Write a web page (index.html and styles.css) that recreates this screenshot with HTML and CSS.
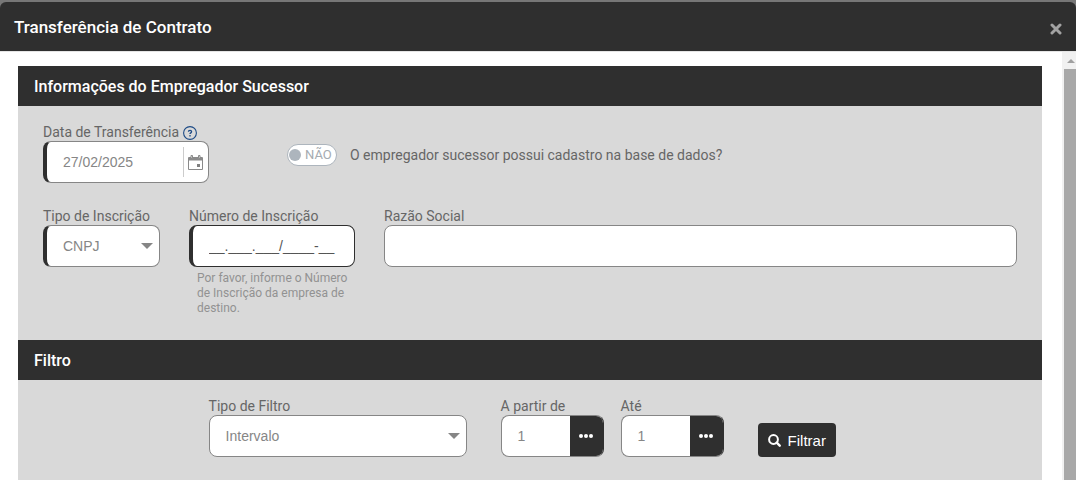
FILE: index.html
```html
<!DOCTYPE html>
<html lang="pt-BR">
<head>
<meta charset="utf-8">
<meta name="viewport" content="width=device-width, initial-scale=1">
<title>Transferência de Contrato</title>
<link rel="stylesheet" href="styles.css">
</head>
<body>
<div class="modal" role="dialog" aria-labelledby="modal-title">
  <header class="modal-header">
    <h1 class="modal-title" id="modal-title">Transferência de Contrato</h1>
    <button class="close" type="button" aria-label="Fechar">
      <svg width="12" height="12" viewBox="0 0 12 12"><path d="M2 2l8 8M10 2l-8 8" stroke="currentColor" stroke-width="3" stroke-linecap="round"/></svg>
    </button>
  </header>
  <div class="modal-main">
    <form class="modal-body">
      <section class="panel">
        <h2 class="panel-title">Informações do Empregador Sucessor</h2>
        <div class="panel-body">
          <div class="row row-date">
            <div class="field w-medium">
              <div class="label-line">
                <label for="date">Data de Transferência</label>
                <button class="help-icon" type="button" aria-label="Ajuda">
                  <svg width="14" height="14" viewBox="0 0 14 14" fill="none" stroke="currentColor"><circle cx="7" cy="7" r="6.4" stroke-width="1.1"/><path d="M5.4 5.8c0-1.9 3.2-1.9 3.2 0 0 1.1-1.6 1.1-1.6 2.3" stroke-width="1.3"/><path d="M7 9v1.4" stroke-width="1.3"/></svg>
                </button>
              </div>
              <div class="control required">
                <input id="date" type="text" value="27/02/2025">
                <button class="calendar" type="button" aria-label="Abrir calendário">
                  <svg width="15" height="15" viewBox="0 0 15 15"><path fill="#8a8a8a" fill-rule="evenodd" d="M1 2h13q1 0 1 1v11q0 1-1 1H1q-1 0-1-1V3q0-1 1-1zM1 5.5V14h13V5.500z"/><path fill="#e4e8e4" stroke="#8a8a8a" d="M3 .5h1.500v3H3zM10.500.5H12v3h-1.500z"/><path fill="#808080" d="M9 9h3v3H9z"/></svg>
                </button>
              </div>
            </div>
            <label class="switch-line">
              <input class="switch-input" type="checkbox">
              <span class="switch"><span class="knob"></span>NÃO</span>
              <span>O empregador sucessor possui cadastro na base de dados?</span>
            </label>
          </div>
          <div class="row row-company">
            <div class="field w-small">
              <label for="type">Tipo de Inscrição</label>
              <div class="control required select">
                <select id="type"><option>CNPJ</option></select>
              </div>
            </div>
            <div class="field w-medium">
              <label for="number">Número de Inscrição</label>
              <div class="control required focused">
                <input id="number" type="text" value="__.___.___/____-__" aria-describedby="number-help">
              </div>
              <p class="hint" id="number-help">Por favor, informe o Número de Inscrição da empresa de destino.</p>
            </div>
            <div class="field grow">
              <label for="name">Razão Social</label>
              <div class="control"><input id="name" type="text"></div>
            </div>
          </div>
        </div>
      </section>
      <section class="panel">
        <h2 class="panel-title">Filtro</h2>
        <div class="panel-body">
          <div class="row row-filter">
            <div class="field w-large">
              <label for="filter">Tipo de Filtro</label>
              <div class="control select">
                <select id="filter"><option>Intervalo</option></select>
              </div>
            </div>
            <div class="range">
              <div class="field w-range">
                <label for="from">A partir de</label>
                <div class="control">
                  <input id="from" type="text" value="1">
                  <button class="more" type="button" aria-label="Pesquisar início"><svg width="14" height="4" viewBox="0 0 14 4" fill="currentColor"><circle cx="2" cy="2" r="2"/><circle cx="7" cy="2" r="2"/><circle cx="12" cy="2" r="2"/></svg></button>
                </div>
              </div>
              <div class="field w-range">
                <label for="to">Até</label>
                <div class="control">
                  <input id="to" type="text" value="1">
                  <button class="more" type="button" aria-label="Pesquisar fim"><svg width="14" height="4" viewBox="0 0 14 4" fill="currentColor"><circle cx="2" cy="2" r="2"/><circle cx="7" cy="2" r="2"/><circle cx="12" cy="2" r="2"/></svg></button>
                </div>
              </div>
            </div>
            <button class="btn" type="button">
              <svg width="13" height="13" viewBox="0 0 13 13" fill="none" stroke="currentColor" stroke-width="2"><circle cx="5.500" cy="5.500" r="4.400"/><path d="M8.700 8.700l3 3" stroke-width="2.400" stroke-linecap="round"/></svg>
              Filtrar
            </button>
          </div>
        </div>
      </section>
    </form>
    <div class="scrollbar" aria-hidden="true">
      <svg class="scroll-up" width="8" height="4" viewBox="0 0 8 4"><path d="M0 4l4-4 4 4z" fill="#a0a0a0"/></svg>
      <div class="thumb"></div>
    </div>
  </div>
</div>
</body>
</html>
```
FILE: styles.css
```css
* { box-sizing: border-box; }

body {
  margin: 0;
  overflow: hidden;
  background: #777;
  font-family: Roboto, "Liberation Sans", sans-serif;
  font-size: 14px;
  line-height: 16px;
  color: #666;
}

button { padding: 0; border: 0; background: none; cursor: pointer; }
svg { display: block; }

.modal {
  display: flex;
  flex-direction: column;
  height: 100vh;
  padding-top: 2px;
}

.modal-header {
  display: flex;
  align-items: center;
  justify-content: space-between;
  height: 50px;
  flex: none;
  padding: 0 14px;
  border-bottom: 1px solid #e5e5e5;
  border-radius: 6px 6px 0 0;
  background: #2f2f2f;
}

.modal-title { margin: 0; font-size: 17px; font-weight: 500; line-height: 20px; color: #fff; }
.close { padding-top: 4px; color: #a3a3a3; }

.modal-main { display: flex; flex: 1; min-height: 0; background: #fff; }
.modal-body { flex: 1; min-width: 0; padding: 14px 20px 0 18px; overflow: hidden; }

.panel-title {
  margin: 0;
  padding: 11px 16px 9px;
  background: #2f2f2f;
  color: #fff;
  font-size: 16px;
  font-weight: 500;
  line-height: 20px;
}

.panel-body { padding: 18px 25px 24px; background: #d9d9d9; }

.row { display: flex; align-items: flex-start; }
.row-date { gap: 78px; margin-bottom: 25px; }
.row-company { gap: 29px; }
.row-filter { gap: 34px; padding-left: 17%; align-items: flex-end; padding-bottom: 40px; }
.range { display: flex; gap: 17px; }

.field { display: flex; flex-direction: column; flex: none; }
.w-small { width: 117px; }
.w-medium { width: 166px; }
.w-large { width: 258px; }
.w-range { width: 103px; }
.grow { flex: 1; min-width: 0; }

.label-line { display: flex; gap: 4px; height: 16px; }
.help-icon { align-self: flex-start; padding-top: 2px; color: #1c4a85; }

.control {
  position: relative;
  display: flex;
  align-items: center;
  height: 42px;
  margin-top: 1px;
  overflow: hidden;
  border: 1px solid #868686;
  border-radius: 8px;
  background: #fff;
}
.required { border-left: 4px solid #2f2f2f; }
.focused { border-color: #2f2f2f; }

.control input,
.control select {
  flex: 1;
  width: 100%;
  min-width: 0;
  height: 100%;
  padding: 0 16px;
  border: 0;
  outline: 0;
  background: transparent;
  appearance: none;
  color: #868686;
  font: 14px "Liberation Sans", Arial, sans-serif;
}
.control.focused input { color: #555; }

.select::after {
  content: "";
  position: absolute;
  right: 6px;
  border: 6px solid transparent;
  border-top-color: #868686;
  border-bottom: 0;
  pointer-events: none;
}

.calendar { flex: none; height: 30px; padding: 0 5px 0 4px; border-left: 1px solid #ccc; }

.hint { margin: 0; padding: 4px 0 0 8px; color: #929292; font-size: 12px; line-height: 15px; }

.switch-line { display: flex; align-items: center; gap: 13px; padding-top: 20px; }
.switch-input { position: absolute; opacity: 0; }
.switch {
  display: flex;
  align-items: center;
  gap: 4px;
  width: 50px;
  height: 22px;
  padding-left: 1px;
  border: 1px solid #adb5bd;
  border-radius: 11px;
  background: #fff;
  color: #a5abb1;
  font-size: 13px;
}
.knob { width: 12px; height: 12px; border-radius: 50%; background: #adb5bd; }

.more {
  display: flex;
  flex: none;
  align-items: center;
  justify-content: center;
  width: 33px;
  height: 42px;
  background: #2f2f2f;
  color: #fff;
}
.control:has(.more) { border-right-color: #2f2f2f; }

.btn {
  display: flex;
  align-items: center;
  gap: 7px;
  height: 34px;
  padding: 0 10px;
  border-radius: 4px;
  background: #2f2f2f;
  color: #fff;
  font: 15px "Liberation Sans", Arial, sans-serif;
}

.scrollbar { display: flex; flex-direction: column; width: 14px; padding-left: 2px; background: #f1f1f1; }
.scroll-up { margin: 7px auto 6px 3px; flex: none; }
.thumb { flex: 1; background: #a8a8a8; }
```
